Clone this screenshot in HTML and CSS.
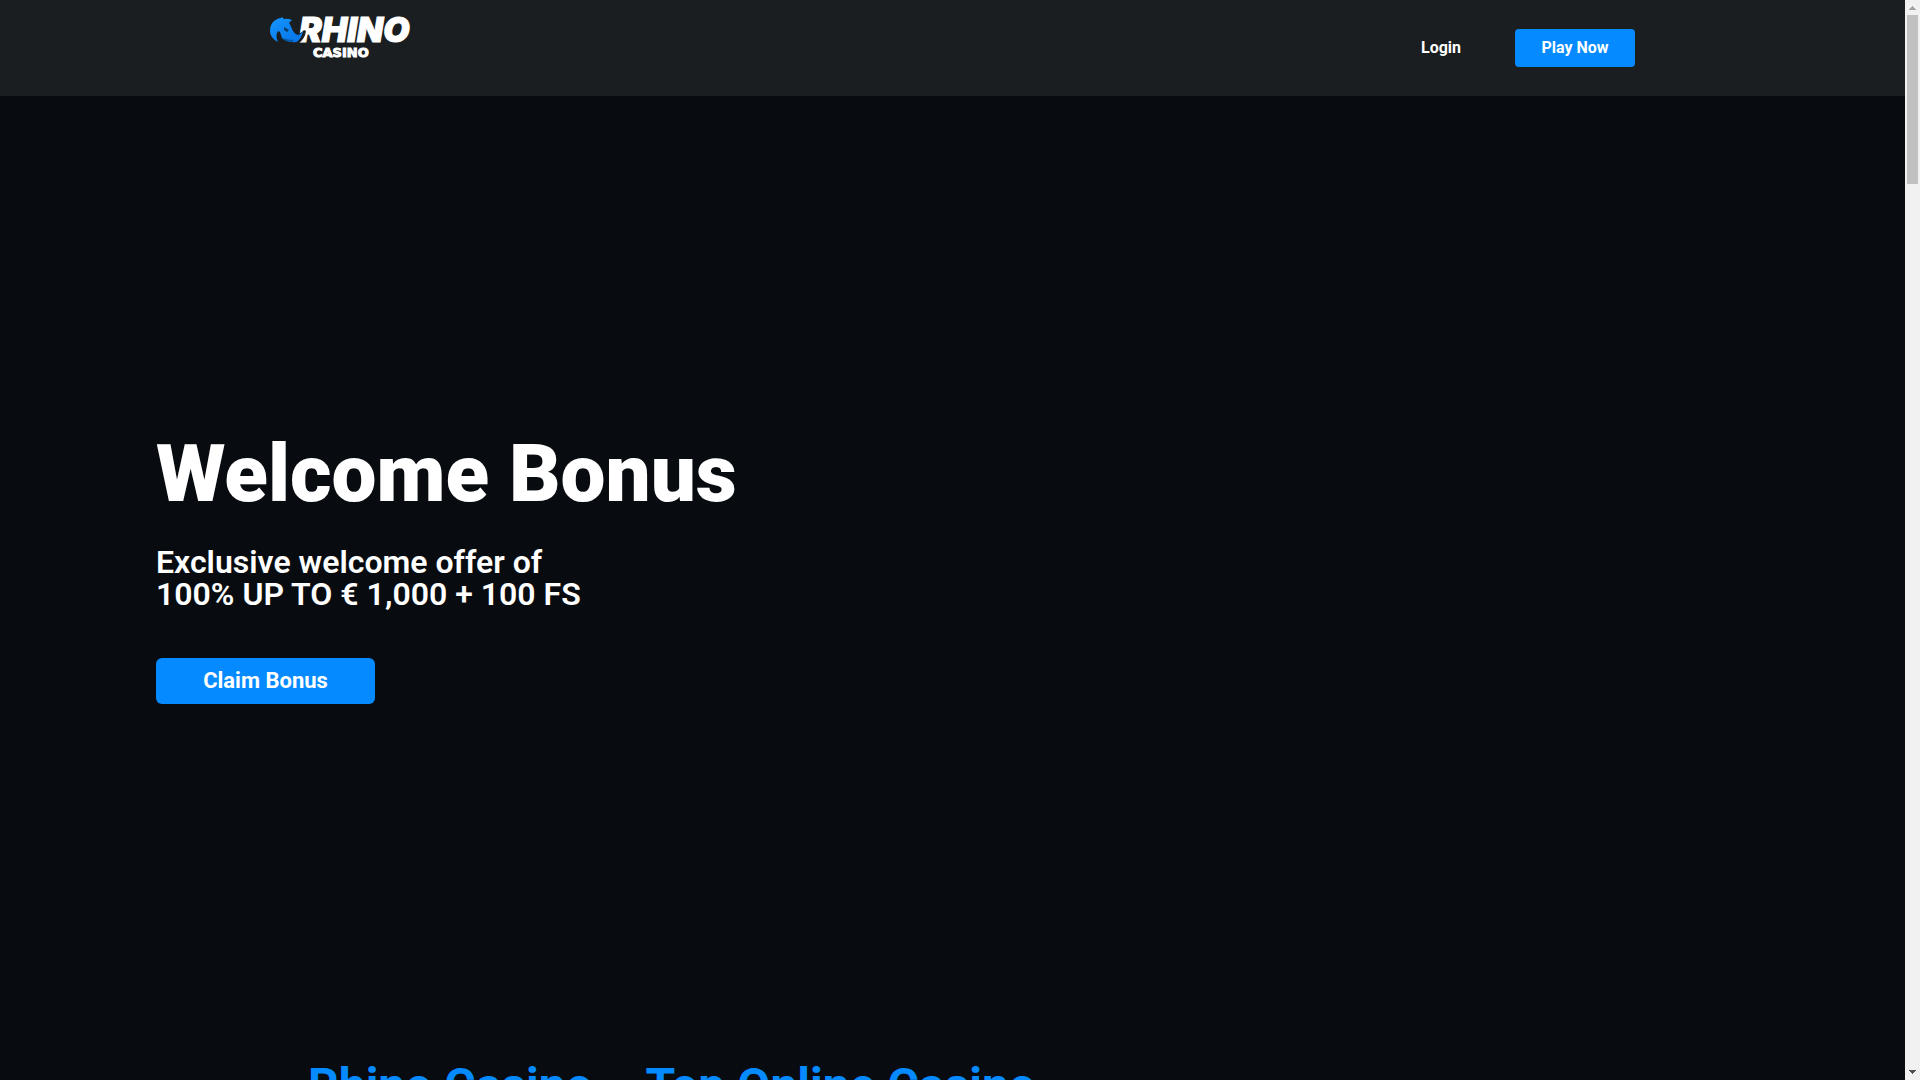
FILE: index.html
```
<!DOCTYPE html>
<html lang="en">
<head>
<meta charset="utf-8">
<title>Rhino Casino</title>
<link rel="stylesheet" href="styles.css">
</head>
<body>
<div class="page">
  <header class="site-header">
    <a class="logo" href="#" aria-label="Rhino Casino">
      <svg width="144" height="42" viewBox="0 0 144 42">
        <defs>
          <linearGradient id="rhino" x1="0" y1="0" x2="1" y2="1">
            <stop offset="0" stop-color="#1496ff"/>
            <stop offset="1" stop-color="#0672e6"/>
          </linearGradient>
        </defs>
        <text class="logo-name" x="29" y="24">RHINO</text>
        <path fill="#1a1e20" d="M24 15Q30 17 34 12L36 13Q35 21 28 26L24 26Z"/>
        <path fill="url(#rhino)" d="M0 13C0 6 4 1 11 0L12 -1L14 1Q18 0 22 2L19 5Q21 8 22 11Q24 16 28 17Q31 16 33 13Q32 19 28 23Q26 25 22 24Q16 24 12 20L10 14L8 13Q5 18 8 24Q0 20 0 13Z"/>
        <path fill="#0c3b68" d="M14 9L19 12L17 14L14 12Z"/>
        <path fill="#0757a8" d="M12 20Q19 22 24 22L22 24Q16 24 12 20Z"/>
        <text class="logo-sub" x="43" y="39">CASINO</text>
      </svg>
    </a>
    <nav class="actions">
      <a class="login" href="#">Login</a>
      <button class="button play" type="button">Play Now</button>
    </nav>
  </header>
  <main>
    <section class="hero">
      <h1>Welcome Bonus</h1>
      <p class="offer">Exclusive welcome offer of<br>100% UP TO € 1,000 + 100 FS</p>
      <button class="button claim" type="button">Claim Bonus</button>
    </section>
    <section class="about">
      <h2>Rhino Casino – Top Online Casino</h2>
    </section>
  </main>
</div>
<div class="scrollbar" aria-hidden="true">
  <svg width="15" height="15" viewBox="0 0 15 15" shape-rendering="crispEdges"><path fill="#a3a3a3" d="M7 6h1v1h1v1h1v1h1v1H4V9h1V8h1V7h1z"/></svg>
  <div class="thumb"></div>
  <svg class="down" width="15" height="15" viewBox="0 0 15 15" shape-rendering="crispEdges"><path fill="#505050" d="M4 5h7v1h-1v1H9v1H8v1H7V8H6V7H5V6H4z"/></svg>
</div>
</body>
</html>
```
FILE: styles.css
```
* { box-sizing: border-box; }
body {
  margin: 0;
  height: 100vh;
  display: grid;
  grid-template-columns: minmax(0, 1fr) 15px;
  overflow: hidden;
  background: #080c10;
  color: #fff;
  font-family: Roboto, sans-serif;
}
.page { height: 100vh; overflow: hidden; }
.site-header {
  height: 96px;
  padding: 0 270px;
  display: flex;
  align-items: center;
  justify-content: space-between;
  background: #1a1e20;
}
.logo { align-self: flex-start; margin-top: 18px; }
.logo svg { display: block; overflow: visible; }
.logo-name { font: italic 900 34px Inter, sans-serif; fill: #fff; stroke: #fff; stroke-width: 1px; }
.logo-sub { font: bold 13px "DejaVu Sans", sans-serif; fill: #fff; stroke: #fff; stroke-width: 1px; }
.actions { display: flex; align-items: center; gap: 54px; }
.login { color: #fff; font-size: 16px; line-height: 20px; font-weight: 700; text-decoration: none; }
.button {
  border: 0;
  color: #fff;
  background: #058aff;
  font-family: inherit;
  font-weight: 700;
}
.play { width: 120px; height: 38px; padding: 0 0 2px; border-radius: 4px; font-size: 16px; }
.hero {
  height: 920px;
  padding: 26px 156px 0;
  display: flex;
  flex-direction: column;
  align-items: flex-start;
  justify-content: center;
}
h1, h2, p { margin: 0; }
h1 { font-size: 80px; line-height: 80px; font-weight: 900; }
.offer { margin: 32px 0 48px; font-size: 32px; line-height: 32px; font-weight: 600; }
.claim { width: 219px; height: 46px; padding: 0 0 2px; border-radius: 6px; font-size: 22px; }
.about { padding: 42px 308px; }
h2 { color: #058aff; font-size: 48px; line-height: 56px; font-weight: 700; white-space: nowrap; }
.scrollbar { display: flex; flex-direction: column; background: #f1f1f1; }
.scrollbar svg { display: block; }
.thumb { height: 169px; margin: 0 2px; background: #c1c1c1; }
.down { margin-top: auto; }
```
